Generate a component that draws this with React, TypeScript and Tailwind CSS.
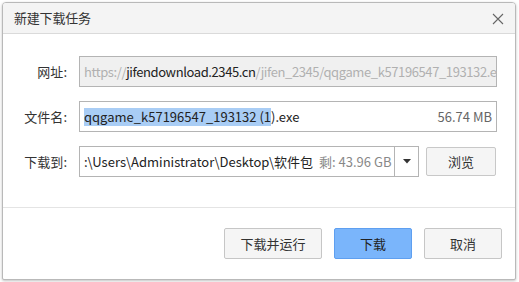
import React from 'react';

const font = { fontFamily: '"Microsoft YaHei", "Noto Sans CJK SC", "Noto Sans", sans-serif' };

function Row({ label, children }: { label: string; children: React.ReactNode }) {
  return (
    <div className="flex items-center h-[31px]">
      <div className="w-[65px] shrink-0 whitespace-nowrap text-right text-[13px] text-[#333] pr-[1px]">{label}:</div>
      <div className="ml-[11px] flex-1 min-w-0 flex h-full">{children}</div>
    </div>
  );
}

export default function App() {
  return (
    <div className="w-[519px] h-[282px] bg-white pt-[2px] pl-[2px]" style={font}>
      <div className="w-[514px] h-[278px] border border-[#b9b9b9] rounded-t-[4px] rounded-b-[2px] shadow-[0_1px_3px_rgba(0,0,0,0.25)] flex flex-col overflow-hidden bg-white">
        {/* title bar */}
        <div className="h-[31px] shrink-0 bg-[#f4f4f4] border-b border-[#dadada] flex items-center justify-between pl-[11px] pr-[11px]">
          <span className="text-[13px] text-[#333] tracking-[-0.2px]">新建下载任务</span>
          <svg width="12" height="12" viewBox="0 0 12 12" className="mt-[1px]">
            <path d="M1 1 L11 11 M11 1 L1 11" stroke="#666" strokeWidth="1.1" />
          </svg>
        </div>

        {/* form */}
        <div className="flex-1 flex flex-col gap-[14px] pt-[22px] pr-[18px] border-b border-[#e4e4e4]">
          <Row label="网址">
            <div className="flex-1 min-w-0 h-full border border-[#b4b4b4] bg-[#f0f0f0] flex items-center pl-[4px] overflow-hidden whitespace-nowrap text-[13px] tracking-[-0.4px]">
              <span className="text-[#b0b0b0]">https://</span>
              <span className="text-[#222]">jifendownload.2345.cn</span>
              <span className="text-[#b0b0b0]">/jifen_2345/qqgame_k57196547_193132.exe</span>
            </div>
          </Row>
          <Row label="文件名">
            <div className="flex-1 min-w-0 h-full border border-[#b4b4b4] bg-white flex items-center pl-[4px] pr-[4px] overflow-hidden whitespace-nowrap text-[13px]">
              <span className="bg-[#a9cdf5] text-[#222] leading-[18px]">qqgame_k57196547_193132 (1</span>
              <span className="text-[#222]">).exe</span>
              <span className="ml-auto text-[#666]">56.74 MB</span>
            </div>
          </Row>
          <Row label="下载到">
            <div className="w-[316px] shrink-0 h-full border border-[#b4b4b4] bg-white flex items-center pl-[4px] overflow-hidden whitespace-nowrap text-[13px]">
              <span className="text-[#222]">:\Users\Administrator\Desktop\软件包</span>
              <span className="ml-[6px] text-[#888]">剩: 43.96 GB</span>
            </div>
            <div className="w-[24px] shrink-0 h-full border border-l-0 border-[#b4b4b4] bg-white flex items-center justify-center">
              <svg width="8" height="5" viewBox="0 0 8 5">
                <path d="M0 0 H8 L4 4.5 Z" fill="#333" />
              </svg>
            </div>
            <button className="ml-[7px] w-[70px] h-[29px] mt-[1px] border border-[#c8c8c8] rounded-[2px] bg-[#f5f5f5] text-[13px] text-[#333]">
              浏览
            </button>
          </Row>
        </div>

        {/* footer */}
        <div className="h-[71px] shrink-0 flex items-start justify-end gap-[12px] pt-[20px] pr-[13px]">
          <button className="w-[98px] h-[31px] border border-[#c6c6c6] rounded-[2px] bg-[#f5f5f5] text-[13px] text-[#333]">
            下载并运行
          </button>
          <button className="w-[78px] h-[31px] border border-[#5e9ff0] rounded-[2px] bg-[#7ab5fb] text-[13px] text-[#222]">
            下载
          </button>
          <button className="w-[78px] h-[31px] border border-[#c6c6c6] rounded-[2px] bg-[#f5f5f5] text-[13px] text-[#333]">
            取消
          </button>
        </div>
      </div>
    </div>
  );
}
